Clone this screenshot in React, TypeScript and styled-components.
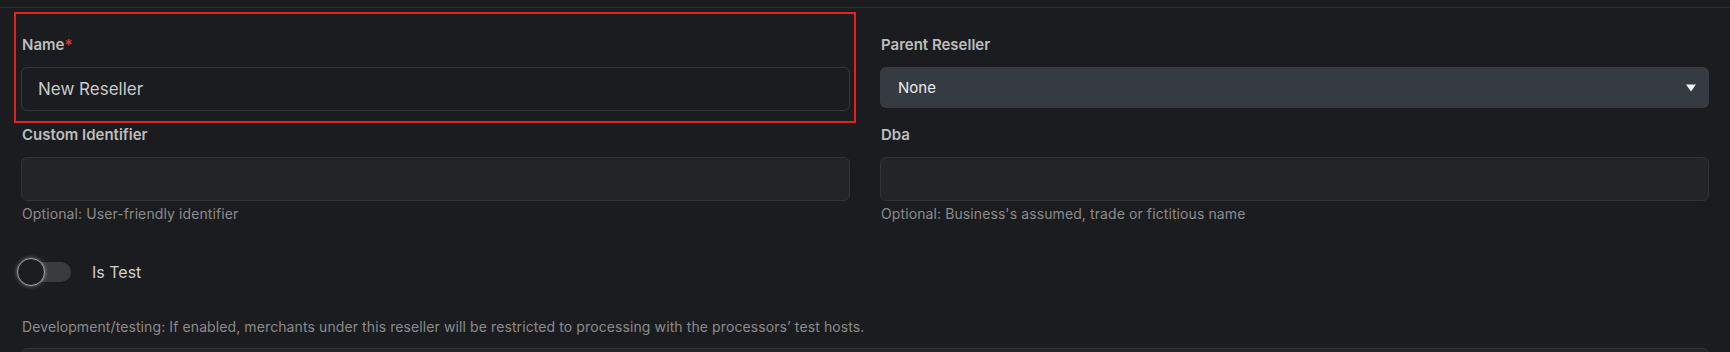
import { FC } from 'react'
import styled, { createGlobalStyle } from 'styled-components'

const GlobalStyle = createGlobalStyle`
  html, body {
    margin: 0;
    padding: 0;
    background: #1b1c1f;
  }
  body {
    font-family: Inter, "Noto Sans", sans-serif;
    color: #c4c4c4;
    overflow: hidden;
  }
`

interface FieldProps {
  label: string
  required?: boolean
  helper?: string
  highlighted?: boolean
  children: React.ReactNode
}

const Field: FC<FieldProps> = ({ label, required, helper, highlighted, children }) => {
  return (
    <FieldWrap $highlighted={highlighted}>
      <Label>
        {label}
        {required && <Star>*</Star>}
      </Label>
      {children}
      {helper && <Helper>{helper}</Helper>}
    </FieldWrap>
  )
}

const App: FC = () => {
  return (
    <>
      <GlobalStyle />
      <Page>
        <Form>
          <Grid>
            <Field label="Name" required highlighted>
              <TextInput $variant="plain" defaultValue="New Reseller" />
            </Field>
            <Field label="Parent Reseller">
              <Select>
                <span>None</span>
                <svg width="10" height="8" viewBox="0 0 10 8">
                  <path d="M0 0.5 L10 0.5 L5 7.5 Z" fill="#f2f2f2" />
                </svg>
              </Select>
            </Field>
            <Field label="Custom Identifier" helper="Optional: User-friendly identifier">
              <TextInput $variant="filled" />
            </Field>
            <Field label="Dba" helper="Optional: Business's assumed, trade or fictitious name">
              <TextInput $variant="filled" />
            </Field>
          </Grid>

          <ToggleRow>
            <Switch role="switch" aria-checked="false">
              <Track />
              <Thumb />
            </Switch>
            <ToggleLabel>Is Test</ToggleLabel>
          </ToggleRow>

          <Note>
            Development/testing: If enabled, merchants under this reseller will be restricted to processing with the
            processors’ test hosts.
          </Note>

          <NextBox />
        </Form>
      </Page>
    </>
  )
}

const Page = styled.div`
  width: 1730px;
  height: 352px;
  overflow: hidden;
  padding-top: 7px;
  box-sizing: border-box;
`

const Form = styled.div`
  border-top: 1px solid #2d2f33;
  padding: 27px 21px 0;
`

const Grid = styled.div`
  display: grid;
  grid-template-columns: 1fr 1fr;
  column-gap: 30px;
  row-gap: 14px;
  align-items: start;
`

const FieldWrap = styled.div<{ $highlighted?: boolean }>`
  display: flex;
  flex-direction: column;
  position: relative;

  ${({ $highlighted }) =>
    $highlighted &&
    `
    &::after {
      content: '';
      position: absolute;
      left: -7px;
      right: -6px;
      top: -23px;
      bottom: -12px;
      border: 2.5px solid #e61f1f;
      pointer-events: none;
    }
  `}
`

const Label = styled.label`
  font-size: 15px;
  line-height: 20px;
  font-weight: 600;
  color: #bdbdbd;
  margin-bottom: 12px;
  padding-left: 1px;
`

const Star = styled.span`
  color: #e03a3a;
`

const TextInput = styled.input<{ $variant: 'plain' | 'filled' }>`
  box-sizing: border-box;
  height: 44px;
  width: 100%;
  border-radius: 6px;
  border: 1px solid ${({ $variant }) => ($variant === 'plain' ? '#36383c' : '#303338')};
  background: ${({ $variant }) => ($variant === 'plain' ? '#1b1c1f' : '#222528')};
  color: #cacaca;
  font-family: Inter, "Noto Sans", sans-serif;
  font-size: 17px;
  padding: 0 16px;
  outline: none;
`

const Select = styled.div`
  box-sizing: border-box;
  height: 41px;
  border-radius: 6px;
  background: #363a41;
  display: flex;
  align-items: center;
  justify-content: space-between;
  padding: 0 13px 0 18px;
  font-size: 15px;
  color: #ececec;
`

const Helper = styled.div`
  font-size: 14px;
  line-height: 20px;
  letter-spacing: 0.1px;
  color: #8b8b8b;
  margin-top: 3px;
  padding-left: 1px;
`

const ToggleRow = styled.div`
  display: flex;
  align-items: center;
  gap: 21px;
  margin-top: 34px;
  margin-left: -4px;
  height: 28px;
`

const Switch = styled.div`
  position: relative;
  width: 54px;
  height: 28px;
  display: flex;
  align-items: center;
`

const Track = styled.span`
  display: block;
  margin-left: 14px;
  width: 40px;
  height: 20px;
  border-radius: 10px;
  background: #3a3b3e;
`

const Thumb = styled.span`
  position: absolute;
  left: 0;
  top: 0;
  width: 28px;
  height: 28px;
  box-sizing: border-box;
  border-radius: 50%;
  background: #1c1d20;
  border: 1.5px solid #a4a4a4;
  box-shadow: 0 0 4px rgba(255, 255, 255, 0.4);
`

const ToggleLabel = styled.span`
  font-size: 16px;
  line-height: 20px;
  color: #cfcfcf;
`

const Note = styled.p`
  margin: 31px 0 0;
  font-size: 14px;
  line-height: 20px;
  letter-spacing: 0.1px;
  color: #8b8b8b;
  padding-left: 1px;
`

const NextBox = styled.div`
  margin-top: 11px;
  height: 44px;
  border-radius: 6px;
  border: 1px solid #303338;
  background: #222528;
`

export default App
